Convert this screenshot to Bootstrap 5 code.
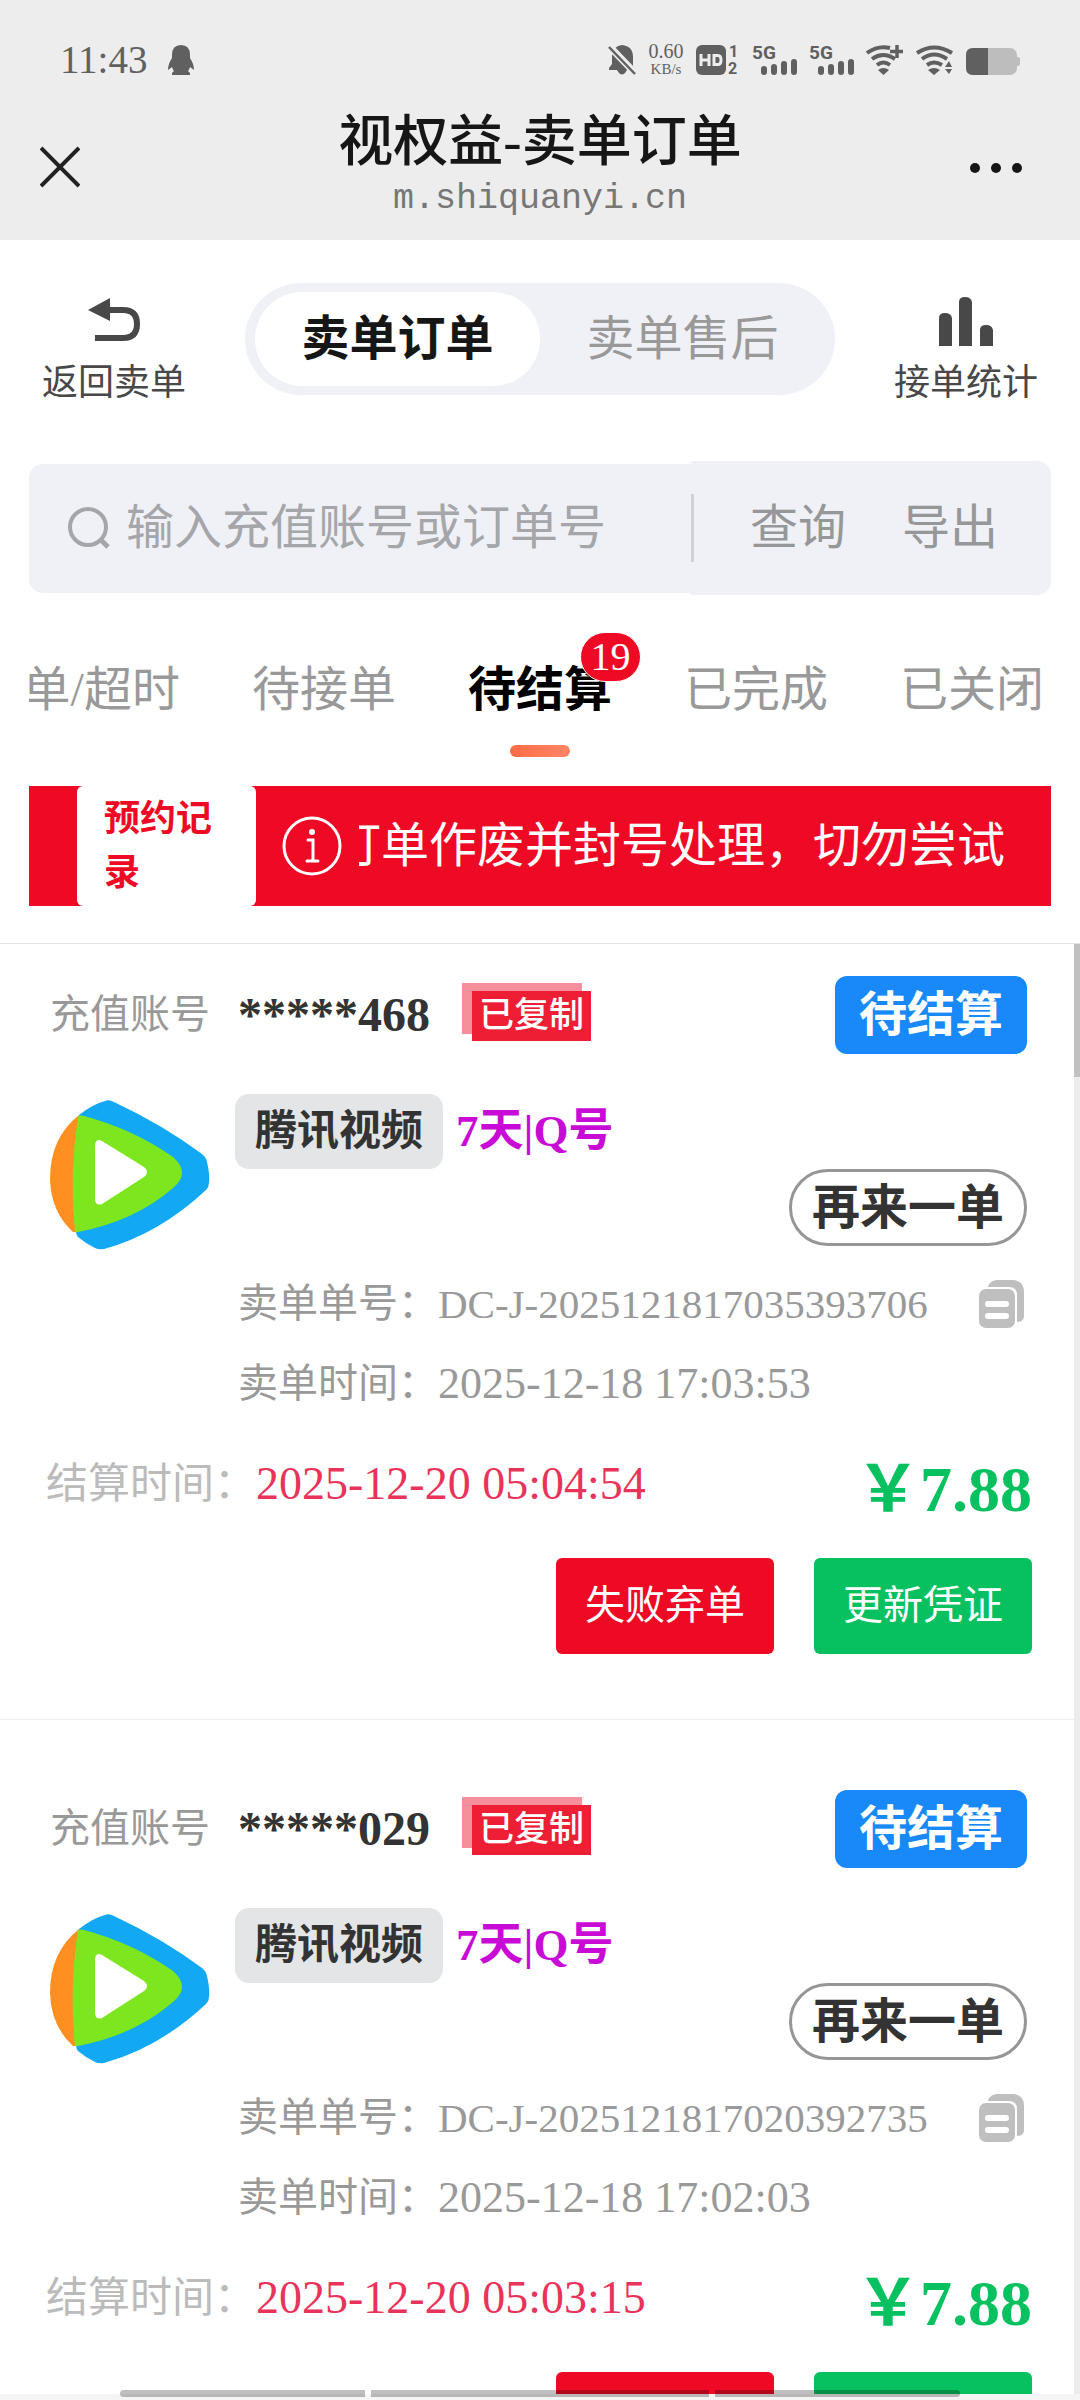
<!DOCTYPE html>
<html lang="zh-CN">
<head>
<meta charset="utf-8">
<meta name="viewport" content="width=device-width, initial-scale=1">
<title>视权益-卖单订单</title>
<link href="https://cdn.jsdelivr.net/npm/bootstrap@5.3.0/dist/css/bootstrap.min.css" rel="stylesheet">
<style>
:root{--red:#ee0a24;--green:#07c160;--soft:#f0f1f7;--mix:"Liberation Serif","Noto Sans CJK SC",serif}
body{font-family:var(--mix);font-size:40px;line-height:80px;color:#333;background:#fff;overflow:hidden}
a{text-decoration:none;color:inherit}
button{border:0;background:none;padding:0;color:inherit;font-family:var(--mix)}
svg{display:block;flex:none}
.app{height:100vh}
.app>*{flex-shrink:0}
.topbar{background:#ededed}
.status{padding:44px 60px 0;height:76px;color:#606060;gap:12px}
.clock{font-size:39px;line-height:32px}
.net{font-size:20px;line-height:18px;width:36px}
.net span{font-size:15px;display:block}
.titlebar{padding:34px 40px 16px}
.titlebar button{width:72px}
.title{font:500 55px/64px var(--mix);color:#161616}
.url{font:35px/50px "Liberation Mono",monospace;color:#777}
.modes{padding:43px 42px 0}
.side{padding-top:14px;gap:12px;font-size:36px;line-height:48px;color:#484848}
.seg{width:590px;height:112px;padding:9px 10px;background:var(--soft)}
.seg button{font-size:48px;line-height:72px;color:#999}
.seg .on{background:#fff;font-weight:700;color:#161616}
.finder{margin:54px 29px 0}
.query{height:129px;padding-left:39px;gap:16px;background:var(--soft);border-radius:14px 0 0 14px;min-width:0}
.query input{border:0;background:none;width:0;min-width:0;font:48px/72px var(--mix);padding:0;outline:0}
.query input::placeholder{color:#a5a6aa;opacity:1}
.acts{height:134px;padding-right:53px;gap:56px;background:var(--soft);border-radius:0 14px 14px 0;font-size:48px;color:#969799;white-space:nowrap;flex:none}
.acts i{width:3px;height:68px;background:#d0d1d6}
.states{margin:30px 29px 0;padding:29px 7px 0 0;gap:72px;overflow:hidden;font:48px/72px var(--mix);color:#999}
.states a{padding-bottom:31px;white-space:nowrap;flex:none}
.states .on{color:#000;font-weight:700}
.states .on::after{content:"";position:absolute;left:50%;bottom:0;width:60px;height:12px;margin-left:-30px;border-radius:6px;background:linear-gradient(90deg,#ff6c45,#ff8566)}
.count{position:absolute;left:112px;top:-22px;width:61px;height:50px;border:1px solid #fff;border-radius:25px;background:var(--red);color:#fff;font:40px/48px "Liberation Serif",serif;text-align:center}
.notice{margin:29px 29px 0;padding-left:48px;background:var(--red);color:#fff}
.booking{width:179px;padding:6px 27px;background:#fff;border-radius:6px;color:var(--red);font-weight:700;font-size:36px;line-height:54px;text-align:left;flex:none}
.marquee{padding:0 46px 0 26px;gap:17px;min-width:0;font:48px/72px var(--mix)}
.marquee div{overflow:hidden;white-space:nowrap}
.app>.orders{margin-top:37px;border-top:1px solid #e4e4e4;overflow:hidden;min-height:0;flex:1 1 0}
.track{right:0;top:0;bottom:0;width:6px;background:#ececec}
.track i{display:block;height:133px;background:#c1c1c1}
.order{padding:69px 0 65px;border-bottom:1px solid #eee}
.order:first-child{padding-top:31px}
.main{padding:0 53px 0 50px}
.foot{padding:24px 48px 0 46px}
.muted{color:#999}
.acct{margin-left:28px;font-weight:700;font-size:48px}
.stamp{margin:0 0 6px 32px;padding:8px 0 0 10px;background:linear-gradient(#f58f9b,#f58f9b) 0 0/120px 51px no-repeat}
.stamp span{display:block;padding:0 7px;background:#ee1f34;color:#fff;font:500 35px/50px var(--mix)}
.state{padding:0 24px;border-radius:12px;background:#1989fa;color:#fff;font:700 48px/78px var(--mix)}
.goods{margin-top:39px;gap:25px}
.goods>svg{margin-top:6px}
.kind{padding:0 20px;border-radius:14px;background:#e4e5e7;font:700 42px/75px var(--mix);margin-right:13px}
.spec{color:#c90bd6;font-weight:700;font-size:45px;line-height:75px}
.again{border:3px solid #969696;padding:0 20px;font-weight:700;font-size:48px;line-height:71px}
.rows{margin-top:18px;padding:0 3px}
.serial{font-size:41px}
.made{font-size:44px}
.settle{font-size:42px;line-height:72px;color:#bbb}
.settle time{font-size:46px;color:#e8345a}
.price{font-size:64px;line-height:84px;font-weight:700;color:var(--green)}
.deal{margin-top:26px;gap:40px}
.deal button{width:218px;height:96px;border-radius:6px;color:#fff;font-size:40px;line-height:60px}
.deal .fail{background:var(--red)}
.deal .renew{background:var(--green)}
.base{height:6px;background:#f5f5f5}
.pill-bar{bottom:3px;gap:6px;padding:0 120px;height:7px;z-index:2}
.pill-bar i{flex:245;background:rgba(0,0,0,.25)}
.pill-bar i:nth-child(2){flex:338}
.pill-bar i:first-child{border-radius:4px 0 0 4px}
.pill-bar i:last-child{border-radius:0 4px 4px 0}
</style>
<script src="https://cdn.jsdelivr.net/npm/bootstrap@5.3.0/dist/js/bootstrap.bundle.min.js"></script>
</head>
<body>
<svg width="0" height="0" class="position-absolute" aria-hidden="true">
  <symbol id="logo" viewBox="0 0 160 150">
    <path fill="#12a8f4" d="M29 15Q43 4 55 1 59 -1 64 2Q113 25 152 54 156 57 157 62Q160 75 159 83 159 87 156 90Q109 134 54 149 49 150 45 148Q35 143 28 137 26 135 26 130Z"/>
    <path fill="#ff8f21" d="M29 15Q0 38 0 79Q1 112 23 132H27Z"/>
    <path fill="#7de61f" d="M28 16Q30 15 34 16Q83 29 123 57Q141 73 123 88Q85 121 28 132H25Q19 74 28 16Z"/>
    <path fill="#fff" d="M45 45Q46 38 52 41L94 67Q100 72 94 77L52 104Q46 106 45 100Z"/>
  </symbol>
  <symbol id="copy" viewBox="0 0 45 48">
    <path fill="#bfbfbf" d="M9 6Q12 0 18 0H33Q45 0 45 12V37Q44 42 38 42V15Q38 7 30 7H9Z"/>
    <rect y="9" width="36" height="39" rx="7" fill="#bfbfbf"/>
    <path d="M9 24H27M9 36H27" stroke="#fff" stroke-width="6" stroke-linecap="round"/>
  </symbol>
</svg>
<div class="app d-flex flex-column position-relative">
  <header class="topbar">
    <div class="status d-flex align-items-center">
      <span class="clock">11:43</span>
      <svg class="ms-2" width="28" height="32" viewBox="0 0 28 32" fill="#606060"><path d="M5 11Q5 1 14 1T23 11V14Q27 20 27 26L23 23Q22 26 21 27L23 29V31H5V29L7 27Q6 26 5 23L1 26Q1 20 5 14Z"/></svg>
      <svg class="ms-auto" width="28" height="32" viewBox="0 0 28 32"><path fill="#606060" d="M14 1Q25 2 25 13V22L28 26H19Q14 35 9 26H1V24L4 20V12Q5 2 14 1Z"/><path d="M1 2 28 30" stroke="#ededed" stroke-width="7"/><path d="M1 3 27 30" stroke="#606060" stroke-width="2.500"/></svg>
      <div class="net text-center">0.60<span>KB/s</span></div>
      <svg width="44" height="32" viewBox="0 0 44 32"><rect y="1" width="30" height="30" rx="6" fill="#606060"/><path d="M5 10V22M5 16H13M13 10V22M18 11.500V20.500H22Q25 20.500 25 16T22 11.500Z" stroke="#ededed" stroke-width="3" fill="none"/><g font-family="Roboto,sans-serif" font-weight="700" font-size="16" fill="#606060"><text x="33" y="13">1</text><text x="32" y="30">2</text></g></svg>
      <svg width="45" height="32" viewBox="0 0 45 32" overflow="visible"><text y="15" font-family="Roboto,sans-serif" font-weight="700" font-size="19" fill="#606060">5G</text><path d="M12 25V28M22 23V28M32 20V28M42 18V28" stroke="#606060" stroke-width="6" stroke-linecap="round"/></svg>
      <svg width="45" height="32" viewBox="0 0 45 32" overflow="visible"><text y="15" font-family="Roboto,sans-serif" font-weight="700" font-size="19" fill="#606060">5G</text><path d="M12 25V28M22 23V28M32 20V28M42 18V28" stroke="#606060" stroke-width="6" stroke-linecap="round"/></svg>
      <svg width="38" height="32" viewBox="0 0 38 32"><g fill="none" stroke="#606060" stroke-width="4"><path d="M1 9Q12 1 24 4M6 15Q17 7 29 15M11 21Q17.500 16 24 21"/><path stroke-width="3.500" d="M31 1V14M24 7.500H37"/></g><path fill="#606060" d="M12 26Q17.500 22 23 26L17.500 31Z"/></svg>
      <svg width="38" height="32" viewBox="0 0 38 32"><g fill="none" stroke="#606060" stroke-width="4"><path d="M1 9Q18 -2 36 9M6 15Q18 6 31 15M11 21Q18 16 26 21"/></g><path fill="#606060" d="M12 26Q18 22 24 26L18 31ZM29 23 33 17 36 23ZM29 25H36L33 30Z"/></svg>
      <svg width="54" height="32" viewBox="0 0 54 32"><rect y="4" width="51" height="27" rx="7" fill="#bdbdbd"/><rect x="50" y="13" width="4" height="9" rx="2" fill="#bdbdbd"/><path fill="#606060" d="M7 4H22V31H7Q0 31 0 24V11Q0 4 7 4Z"/></svg>
    </div>
    <div class="titlebar d-flex align-items-center">
      <button type="button" aria-label="关闭"><svg width="40" height="42" viewBox="0 0 40 42"><path d="M1 2 39 40M39 2 1 40" stroke="#222" stroke-width="4"/></svg></button>
      <div class="flex-grow-1 text-center"><div class="title">视权益-卖单订单</div><div class="url">m.shiquanyi.cn</div></div>
      <button type="button" aria-label="更多"><svg width="54" height="42" viewBox="0 0 54 42"><g fill="#161616"><circle cx="7" cy="22" r="5"/><circle cx="28" cy="22" r="5"/><circle cx="49" cy="22" r="5"/></g></svg></button>
    </div>
  </header>

  <nav class="modes d-flex justify-content-between align-items-start">
    <a href="#" class="side d-flex flex-column align-items-center"><svg width="52" height="50" viewBox="0 0 52 50"><path fill="#484848" d="M0 13 22 1V24Z"/><path d="M20 13H35Q49 13 49 27 49 41 35 41H7" fill="none" stroke="#484848" stroke-width="6"/></svg>返回卖单</a>
    <div class="seg d-flex rounded-pill"><button type="button" class="on flex-fill w-50 rounded-pill">卖单订单</button><button type="button" class="flex-fill w-50">卖单售后</button></div>
    <a href="#" class="side d-flex flex-column align-items-center"><svg width="56" height="50" viewBox="0 0 56 50" fill="#484848"><path d="M1 49V21Q1 16 7 16T14 21V49ZM21 49V5Q21 0 27 0T34 5V49ZM42 49V33Q42 28 48 28T55 33V49Z"/></svg>接单统计</a>
  </nav>

  <form class="finder d-flex align-items-center">
    <div class="query d-flex align-items-center flex-grow-1">
      <svg width="42" height="42" viewBox="0 0 42 42"><circle cx="20" cy="20" r="18" fill="none" stroke="#a5a6aa" stroke-width="4"/><path d="M32 32 40 40" stroke="#a5a6aa" stroke-width="5"/></svg>
      <input class="flex-grow-1" type="text" placeholder="输入充值账号或订单号" aria-label="输入充值账号或订单号">
    </div>
    <div class="acts d-flex align-items-center"><i></i><button type="button">查询</button><button type="button">导出</button></div>
  </form>

  <nav class="states d-flex justify-content-end">
    <a href="#">弃单/超时</a><a href="#">待接单</a><a href="#" class="on position-relative">待结算<span class="count">19</span></a><a href="#">已完成</a><a href="#">已关闭</a>
  </nav>

  <div class="notice d-flex">
    <button type="button" class="booking">预约记录</button>
    <div class="marquee d-flex align-items-center flex-grow-1">
      <svg width="60" height="60" viewBox="0 0 60 60"><g fill="none" stroke="#fff" stroke-width="3"><circle cx="30" cy="30" r="28"/><path d="M26 24H31V45M25 45H36" stroke-linecap="round"/></g><circle cx="30" cy="16" r="3" fill="#fff"/></svg>
      <div class="d-flex justify-content-end flex-grow-1"><span>订单作废并封号处理，切勿尝试</span></div>
    </div>
  </div>

  <main class="orders position-relative">
    <article class="order">
      <div class="main">
        <div class="d-flex align-items-center">
          <span class="muted">充值账号</span><span class="acct">*****468</span><div class="stamp"><span>已复制</span></div><span class="state ms-auto">待结算</span>
        </div>
        <div class="goods d-flex align-items-start">
          <svg width="160" height="150"><use href="#logo"/></svg>
          <div class="flex-grow-1">
            <div class="d-flex"><span class="kind">腾讯视频</span><span class="spec">7天|Q号</span></div>
            <div class="d-flex justify-content-end"><button type="button" class="again rounded-pill">再来一单</button></div>
            <div class="rows muted">
              <div class="d-flex align-items-center"><span>卖单单号：</span><span class="serial">DC-J-2025121817035393706</span><button type="button" class="ms-auto" aria-label="复制"><svg width="45" height="48"><use href="#copy"/></svg></button></div>
              <div class="d-flex"><span>卖单时间：</span><time class="made">2025-12-18 17:03:53</time></div>
            </div>
          </div>
        </div>
      </div>
      <div class="foot">
        <div class="d-flex justify-content-between align-items-start"><div class="settle d-flex">结算时间：<time>2025-12-20 05:04:54</time></div><span class="price">￥7.88</span></div>
        <div class="deal d-flex justify-content-end"><button type="button" class="fail">失败弃单</button><button type="button" class="renew">更新凭证</button></div>
      </div>
    </article>
    <article class="order">
      <div class="main">
        <div class="d-flex align-items-center">
          <span class="muted">充值账号</span><span class="acct">*****029</span><div class="stamp"><span>已复制</span></div><span class="state ms-auto">待结算</span>
        </div>
        <div class="goods d-flex align-items-start">
          <svg width="160" height="150"><use href="#logo"/></svg>
          <div class="flex-grow-1">
            <div class="d-flex"><span class="kind">腾讯视频</span><span class="spec">7天|Q号</span></div>
            <div class="d-flex justify-content-end"><button type="button" class="again rounded-pill">再来一单</button></div>
            <div class="rows muted">
              <div class="d-flex align-items-center"><span>卖单单号：</span><span class="serial">DC-J-2025121817020392735</span><button type="button" class="ms-auto" aria-label="复制"><svg width="45" height="48"><use href="#copy"/></svg></button></div>
              <div class="d-flex"><span>卖单时间：</span><time class="made">2025-12-18 17:02:03</time></div>
            </div>
          </div>
        </div>
      </div>
      <div class="foot">
        <div class="d-flex justify-content-between align-items-start"><div class="settle d-flex">结算时间：<time>2025-12-20 05:03:15</time></div><span class="price">￥7.88</span></div>
        <div class="deal d-flex justify-content-end"><button type="button" class="fail">失败弃单</button><button type="button" class="renew">更新凭证</button></div>
      </div>
    </article>
    <div class="track position-absolute"><i></i></div>
  </main>
  <div class="base"></div>
  <div class="pill-bar position-absolute start-0 end-0 d-flex"><i></i><i></i><i></i></div>
</div>
</body>
</html>
